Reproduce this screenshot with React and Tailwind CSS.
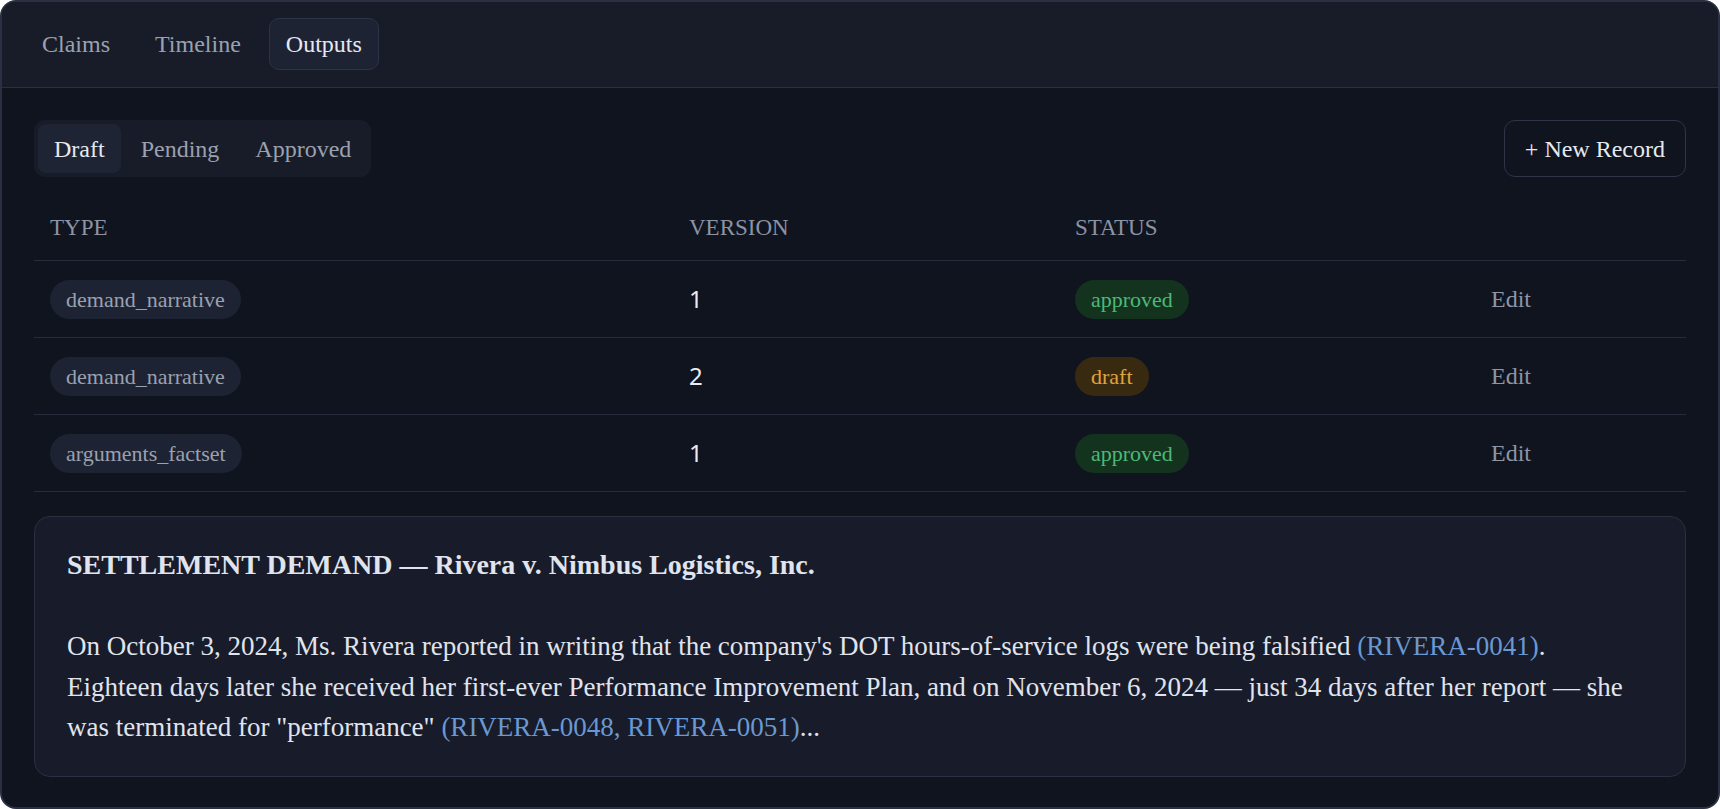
import { useState } from "react";

const rows = [
  { type: "demand_narrative", version: 1, status: "approved" },
  { type: "demand_narrative", version: 2, status: "draft" },
  { type: "arguments_factset", version: 1, status: "approved" },
];

function StatusBadge({ status }) {
  const cls =
    status === "approved"
      ? "bg-[#13331f] text-[#4cb978]"
      : "bg-[#382a10] text-[#e0a43a]";
  return (
    <span className={`inline-flex h-[39px] items-center rounded-full px-4 text-[22px] ${cls}`}>
      {status}
    </span>
  );
}

export default function App() {
  const [tab, setTab] = useState("Outputs");
  const [filter, setFilter] = useState("Draft");

  return (
    <div className="h-[809px] w-full bg-white font-['Liberation_Serif',serif]">
      <div className="flex h-full flex-col overflow-hidden rounded-2xl border-2 border-[#2a3042] bg-[#10141f]">
        {/* Top tabs */}
        <div className="flex items-center gap-[11px] border-b border-[#2a3042] bg-[#181c29] px-[23px] pb-[17px] pt-4">
          {["Claims", "Timeline", "Outputs"].map((t) => (
            <button
              key={t}
              onClick={() => setTab(t)}
              className={`h-[52px] rounded-[10px] border px-4 text-[24px] ${
                tab === t
                  ? "border-[#2c3346] bg-[#1e2334] text-[#e6e9f0]"
                  : "border-transparent text-[#9aa1b0]"
              }`}
            >
              {t}
            </button>
          ))}
        </div>

        <div className="flex-1 px-8 pt-8">
          {/* Filter + action */}
          <div className="flex items-center justify-between">
            <div className="flex gap-1 rounded-[11px] bg-[#181c29] p-1">
              {["Draft", "Pending", "Approved"].map((f) => (
                <button
                  key={f}
                  onClick={() => setFilter(f)}
                  className={`h-[49px] rounded-[8px] px-4 text-[24px] ${
                    filter === f ? "bg-[#1f2435] text-[#e6e9f0]" : "text-[#9aa1b0]"
                  }`}
                >
                  {f}
                </button>
              ))}
            </div>
            <button className="h-[57px] rounded-[11px] border border-[#2e3548] px-5 text-[24px] text-[#e6e9f0]">
              + New Record
            </button>
          </div>

          {/* Table */}
          <div className="mt-5">
            <div className="grid h-[64px] grid-cols-[639px_386px_416px_1fr] items-center border-b border-[#262c3c] text-[23px] text-[#8c93a3]">
              <div className="px-4">TYPE</div>
              <div className="px-4">VERSION</div>
              <div className="px-4">STATUS</div>
              <div />
            </div>
            {rows.map((r, i) => (
              <div
                key={i}
                className="grid h-[77px] grid-cols-[639px_386px_416px_1fr] items-center border-b border-[#262c3c]"
              >
                <div className="px-4">
                  <span className="inline-flex h-[39px] items-center rounded-full bg-[#1e2333] px-4 text-[22px] text-[#9aa1b0]">
                    {r.type}
                  </span>
                </div>
                <div className="px-4 font-['Noto_Sans',sans-serif] text-[24px] text-[#e8ebf2]">
                  {r.version}
                </div>
                <div className="px-4">
                  <StatusBadge status={r.status} />
                </div>
                <div className="px-4 text-[24px] text-[#8e95a5]">Edit</div>
              </div>
            ))}
          </div>

          {/* Preview card */}
          <div className="mt-6 rounded-2xl border border-[#2a3042] bg-[#181c2a] pb-7 pl-8 pr-12 pt-7 text-[#e0e4ee]">
            <div className="mb-[40.5px] text-[28px] font-bold leading-[40.5px]">
              SETTLEMENT DEMAND — Rivera v. Nimbus Logistics, Inc.
            </div>
            <p className="text-[27px] leading-[40.5px]">
              On October 3, 2024, Ms. Rivera reported in writing that the company's DOT
              hours-of-service logs were being falsified{" "}
              <span className="text-[#6a98d2]">(RIVERA-0041)</span>. Eighteen days later she
              received her first-ever Performance Improvement Plan, and on November 6, 2024 —
              just 34 days after her report — she was terminated for "performance"{" "}
              <span className="text-[#6a98d2]">(RIVERA-0048, RIVERA-0051)</span>...
            </p>
          </div>
        </div>
      </div>
    </div>
  );
}
